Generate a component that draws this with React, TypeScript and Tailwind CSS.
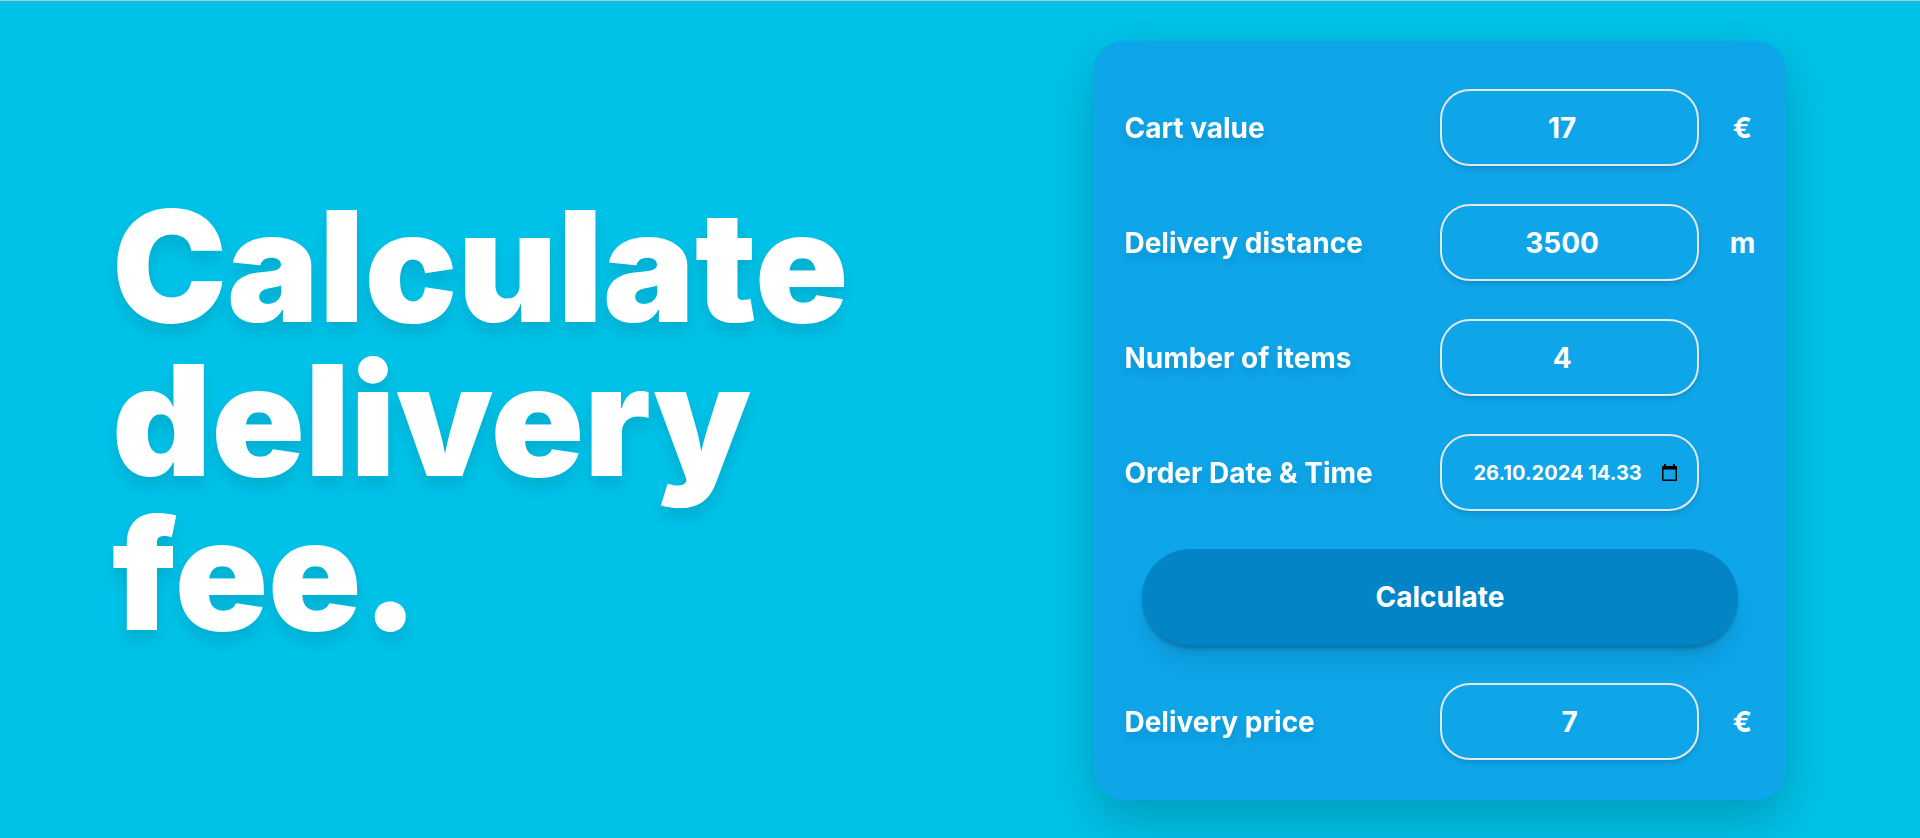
import { useState } from "react";

const fieldClass =
  "h-[77px] w-full min-w-0 rounded-[30px] border-2 border-gray-200 bg-transparent text-center text-white outline-none shadow-[0_4px_6px_-1px_rgba(0,0,0,0.1),0_2px_4px_-2px_rgba(0,0,0,0.1)]";

const labelClass =
  "col-span-4 pl-[30px] drop-shadow-[0_6px_4px_rgba(0,0,0,0.1)]";

type NumberRowProps = {
  id: string;
  label: string;
  unit?: string;
  value: string;
  onChange: (value: string) => void;
};

const NumberRow = ({ id, label, unit, value, onChange }: NumberRowProps) => (
  <div className="grid grid-cols-8 items-center">
    <label htmlFor={id} className={labelClass}>
      {label}
    </label>
    <div className="col-span-3">
      <input
        id={id}
        type="number"
        className={fieldClass}
        value={value}
        onChange={(e) => onChange(e.target.value)}
      />
    </div>
    {unit && <span className="text-center">{unit}</span>}
  </div>
);

const App = () => {
  const [cartValue, setCartValue] = useState<string>("17");
  const [distance, setDistance] = useState<string>("3500");
  const [items, setItems] = useState<string>("4");
  const [time, setTime] = useState<string>("26.10.2024 14.33");
  const [price, setPrice] = useState<string>("7");

  function handleSubmit(e: React.FormEvent) {
    e.preventDefault();
    setPrice("7");
  }

  return (
    <main className="flex min-h-screen items-center justify-between border-t border-[#b9c4c8] bg-[#00c2e8] pt-10 pr-[7%] pb-[38px] pl-28 font-['Inter',sans-serif] text-white">
      <h1 className="w-2/5 pb-[2px] text-[154px] leading-none font-black drop-shadow-[0_10px_8px_rgba(0,0,0,0.1)]">
        Calculate delivery fee.
      </h1>
      <form
        onSubmit={handleSubmit}
        className="flex w-[36vw] flex-col gap-[38px] rounded-[30px] bg-[#0ea5e9] pt-12 pb-10 text-[28px] leading-9 font-bold shadow-[0_20px_50px_rgba(0,0,0,0.2)]"
      >
        <NumberRow id="cart" label="Cart value" unit="€" value={cartValue} onChange={setCartValue} />
        <NumberRow id="distance" label="Delivery distance" unit="m" value={distance} onChange={setDistance} />
        <NumberRow id="items" label="Number of items" value={items} onChange={setItems} />
        <div className="grid grid-cols-8 items-center">
          <label htmlFor="time" className={labelClass}>
            Order Date &amp; Time
          </label>
          <div className="relative col-span-3">
            <input
              id="time"
              type="text"
              className={`${fieldClass} pr-6 text-[20px]`}
              value={time}
              onChange={(e) => setTime(e.target.value)}
            />
            <button type="button" aria-label="Pick a date" className="absolute inset-y-0 right-[22px]">
              <svg width="15" height="17" viewBox="0 0 15 17" fill="#000">
                <path
                  fillRule="evenodd"
                  d="M2 0h2v2h7V0h2v2h1a1 1 0 0 1 1 1v13a1 1 0 0 1-1 1H1a1 1 0 0 1-1-1V3a1 1 0 0 1 1-1h1zM1.5 5.5v10h12v-10z"
                />
              </svg>
            </button>
          </div>
        </div>
        <button
          type="submit"
          className="mx-12 h-24 rounded-full bg-[#0284c7] shadow-[0_20px_25px_-5px_rgba(0,0,0,0.1),0_8px_10px_-6px_rgba(0,0,0,0.1),0_4px_3px_rgba(0,0,0,0.14)]"
        >
          Calculate
        </button>
        <div className="grid grid-cols-8 items-center">
          <label htmlFor="price" className={labelClass}>
            Delivery price
          </label>
          <div className="col-span-3">
            <input id="price" type="text" readOnly className={fieldClass} value={price} />
          </div>
          <span className="text-center">€</span>
        </div>
      </form>
    </main>
  );
};
export default App;
